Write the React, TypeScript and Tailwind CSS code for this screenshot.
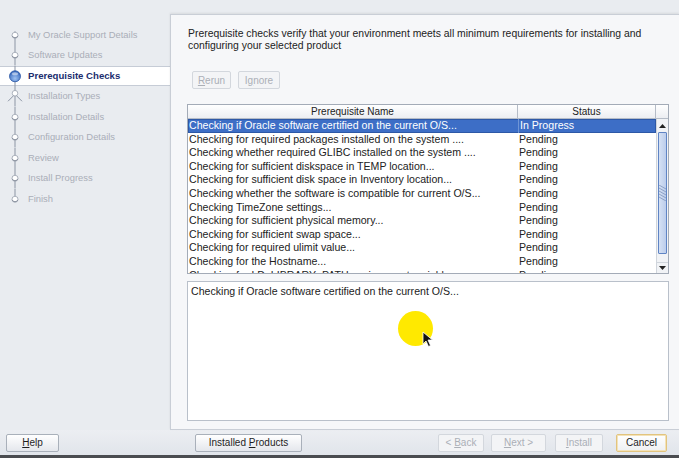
import React from "react";

const steps = [
  "My Oracle Support Details",
  "Software Updates",
  "Prerequisite Checks",
  "Installation Types",
  "Installation Details",
  "Configuration Details",
  "Review",
  "Install Progress",
  "Finish",
];

const checks = [
  "Checking if Oracle software certified on the current O/S...",
  "Checking for required packages installed on the system ....",
  "Checking whether required GLIBC installed on the system ....",
  "Checking for sufficient diskspace in TEMP location...",
  "Checking for sufficient disk space in Inventory location...",
  "Checking whether the software is compatible for current O/S...",
  "Checking TimeZone settings...",
  "Checking for sufficient physical memory...",
  "Checking for sufficient swap space...",
  "Checking for required ulimit value...",
  "Checking for the Hostname...",
  "Checking for LD_LIBRARY_PATH environment variable...",
];

const StepMarker = ({ index, last }: { index: number; last: boolean }) => {
  const cy = 10.25;
  return (
    <svg width="26" height="20.5" viewBox="0 0 26 20.5" className="shrink-0">
      <line
        x1="13"
        y1={index === 0 ? cy - 4 : 0}
        x2="13"
        y2={last ? cy : 20.5}
        stroke="#8c95a4"
        strokeWidth="1"
      />
      {index === 2 ? (
        <>
          <defs>
            <radialGradient id="sel" cx="0.5" cy="0.7" r="0.7">
              <stop offset="0" stopColor="#9fc2f2" />
              <stop offset="1" stopColor="#2f61b8" />
            </radialGradient>
          </defs>
          <circle cx="13" cy={cy} r="5.5" fill="url(#sel)" stroke="#2a56a3" strokeWidth="0.8" />
          <ellipse cx="13" cy={cy - 2.5} rx="3" ry="1.5" fill="#ffffff" opacity="0.5" />
        </>
      ) : index === 3 ? (
        <>
          <line x1="13" y1={cy - 2} x2="6" y2={cy + 5} stroke="#8c95a4" strokeWidth="1" />
          <line x1="13" y1={cy - 2} x2="20" y2={cy + 5} stroke="#8c95a4" strokeWidth="1" />
          <circle cx="13" cy={cy - 3} r="2.8" fill="#ffffff" stroke="#9aa2af" strokeWidth="0.8" />
        </>
      ) : (
        <>
          <circle cx="13" cy={cy} r="3" fill="#ffffff" stroke="#9aa2af" strokeWidth="0.8" />
          <path d={`M10.2 ${cy + 0.6} A3 3 0 0 0 15.8 ${cy + 0.6}`} fill="none" stroke="#7f8896" strokeWidth="0.9" />
        </>
      )}
    </svg>
  );
};

const WizardButton = ({
  label,
  under,
  width,
  disabled,
  focused,
  className = "",
}: {
  label: string;
  under: number;
  width: string;
  disabled?: boolean;
  focused?: boolean;
  className?: string;
}) => (
  <div
    className={`${width} h-[18px] flex items-center justify-center rounded-[2px] border text-[10px] ${
      disabled
        ? "border-[#d3d7dd] bg-[#f3f4f6] text-[#abafb6]"
        : focused
        ? "border-[#e2c47e] bg-gradient-to-b from-white to-[#eef0f3] text-[#1e1e1e] shadow-[inset_0_0_0_1px_#f3e2b8]"
        : "border-[#a9b0ba] bg-gradient-to-b from-white to-[#e4e7ec] text-[#1e1e1e]"
    } ${className}`}
  >
    {under < 0 ? (
      <span className="whitespace-pre">{label}</span>
    ) : (
      <span className="whitespace-pre">
        {label.slice(0, under)}
        <span className="underline">{label.charAt(under)}</span>
        {label.slice(under + 1)}
      </span>
    )}
  </div>
);

export default function App() {
  return (
    <div
      className="relative w-[679px] h-[458px] overflow-hidden bg-[#e9ecf0] text-[10px] text-[#222]"
      style={{ fontFamily: '"Liberation Sans", Arial, sans-serif' }}
    >
      <div className="flex h-[430px]">
        {/* Steps */}
        <div className="w-[170px] shrink-0 pt-[24.75px] text-[9.4px]">
          {steps.map((s, i) => (
            <div
              key={s}
              className={`flex items-center h-[20.5px] ${
                i === 2 ? "bg-white border-y border-[#c6ccd6]" : ""
              }`}
            >
              <div className="w-[2px]" />
              <StepMarker index={i} last={i === steps.length - 1} />
              <span
                className={
                  i === 2 ? "font-bold text-[9.6px] text-[#1b2d6e]" : "text-[#a9aeb8]"
                }
              >
                {s}
              </span>
            </div>
          ))}
        </div>

        {/* Content */}
        <div className="flex-1 mt-[14px] bg-[#f6f7f9] border-l border-t border-b border-[#c9ced6] shadow-[0_-1px_2px_rgba(0,0,0,0.08)] pl-[16px] pr-[10px] pt-[13px]">
          <p className="pl-[1px] leading-[12px] text-[10.4px]">
            Prerequisite checks verify that your environment meets all minimum requirements for installing and
            <br />
            configuring your selected product
          </p>

          <div className="flex gap-[7px] ml-[5px] mt-[19px]">
            <WizardButton label="Rerun" under={0} width="w-[39px]" disabled className="h-[17px]" />
            <WizardButton label="Ignore" under={1} width="w-[42px]" disabled className="h-[17px]" />
          </div>

          {/* Table */}
          <div className="mt-[15px] w-[482px] border border-[#a3abb7] bg-white text-[10.6px]">
            <div className="flex h-[14px] bg-gradient-to-b from-white to-[#eceef2] border-b border-[#b5bcc7] leading-[14px] text-[10px]">
              <div className="w-[330px] text-center border-r border-[#b5bcc7]">Prerequisite Name</div>
              <div className="w-[138px] text-center border-r border-[#b5bcc7]">Status</div>
              <div className="flex-1" />
            </div>
            <div className="flex h-[154px] overflow-hidden">
              <div className="w-[468px]">
                {checks.map((c, i) => (
                  <div
                    key={c}
                    className={`flex h-[13.6px] leading-[13.6px] ${
                      i === 0 ? "bg-[#3d6ec6] text-white shadow-[inset_0_0_0_1px_#2d58a6]" : ""
                    }`}
                  >
                    <div className="w-[330px] pl-[1px] whitespace-nowrap overflow-hidden">{c}</div>
                    <div className={`w-[138px] pl-[1px] ${i === 0 ? "border-l border-[#6f95d6]" : ""}`}>
                      {i === 0 ? "In Progress" : "Pending"}
                    </div>
                  </div>
                ))}
              </div>
              {/* Scrollbar */}
              <div className="w-[12px] flex flex-col bg-[#f1f3f6] border-l border-[#d0d5dc]">
                <div className="h-[13px] flex items-center justify-center">
                  <svg width="7" height="4" viewBox="0 0 7 4">
                    <path d="M0 4 L3.5 0 L7 4 Z" fill="#222" />
                  </svg>
                </div>
                <div className="mx-[1px] h-[122px] rounded-[1px] border border-[#5f84c4] bg-gradient-to-r from-[#d5e1f4] to-[#bccdeb] flex items-center justify-center">
                  <svg width="7" height="16" viewBox="0 0 7 16">
                    {[0, 3, 6, 9, 12].map((y) => (
                      <line key={y} x1="0" y1={y} x2="7" y2={y + 4} stroke="#7d93ba" strokeWidth="0.8" />
                    ))}
                  </svg>
                </div>
                <div className="flex-1" />
                <div className="h-[11px] flex items-center justify-center border-t border-[#d0d5dc]">
                  <svg width="7" height="4" viewBox="0 0 7 4">
                    <path d="M0 0 L3.5 4 L7 0 Z" fill="#222" />
                  </svg>
                </div>
              </div>
            </div>
          </div>

          {/* Details */}
          <div className="mt-[7px] w-[482px] h-[140px] border border-[#b9c0ca] bg-white px-[3px] pt-[3px] leading-[13px] text-[10.6px]">
            Checking if Oracle software certified on the current O/S...
          </div>
        </div>
      </div>

      {/* Bottom bar */}
      <div className="flex items-center h-[25px] bg-gradient-to-b from-[#eceef2] to-[#e1e5eb]">
        <WizardButton label="Help" under={0} width="w-[53px]" className="ml-[6px]" />
        <WizardButton label="Installed Products" under={10} width="w-[107px]" className="ml-[136px]" />
        <WizardButton label="< Back" under={2} width="w-[46px]" disabled className="ml-[136px]" />
        <WizardButton label="Next >" under={0} width="w-[55px]" disabled className="ml-[7px]" />
        <WizardButton label="Install" under={0} width="w-[48px]" disabled className="ml-[9px]" />
        <WizardButton label="Cancel" under={-1} width="w-[51px]" focused className="ml-[13px]" />
      </div>
      <div className="h-[3px] bg-[#4a4c50]" />

      {/* Highlight + cursor overlay */}
      <div className="absolute left-[398px] top-[311px] w-[35px] h-[35px] rounded-full bg-[#ffe900]" />
      <svg className="absolute left-[422px] top-[331px]" width="12" height="17" viewBox="0 0 12 17">
        <path d="M1 1 L1 13 L4 10 L6.5 15.5 L8.5 14.5 L6 9 L10.5 9 Z" fill="#111" stroke="#fff" strokeWidth="0.8" />
      </svg>
    </div>
  );
}
